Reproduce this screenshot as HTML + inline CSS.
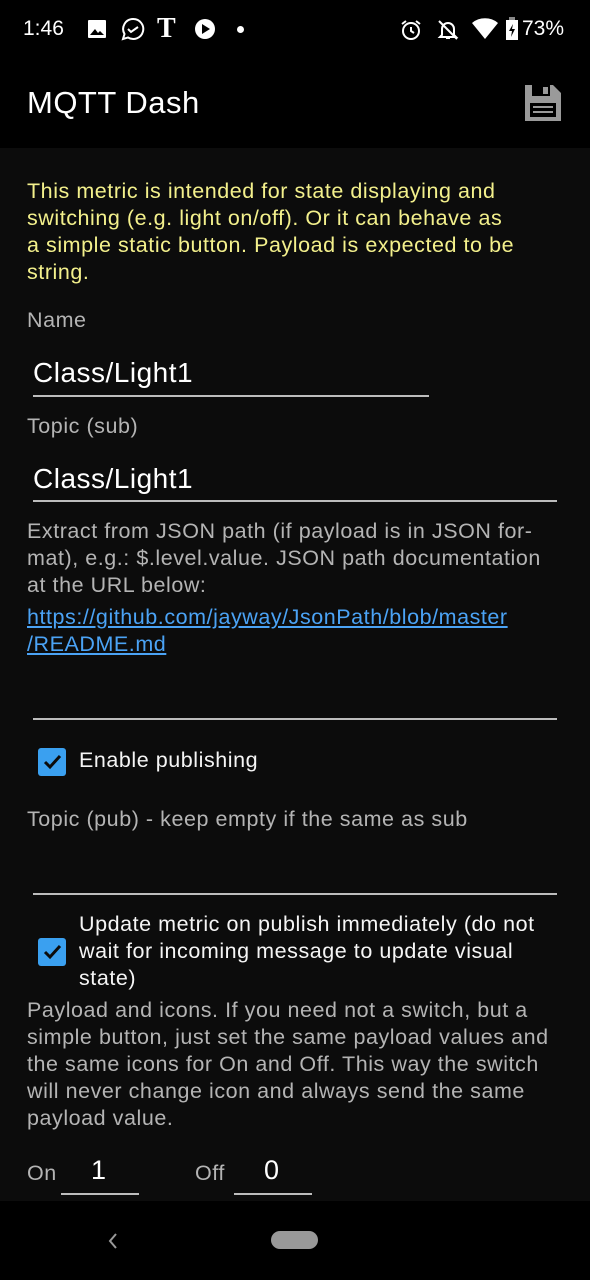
<!DOCTYPE html>
<html><head><meta charset="utf-8"><style>
*{margin:0;padding:0;box-sizing:border-box}
body{width:590px;height:1280px;background:#0c0c0c;font-family:"Liberation Sans",sans-serif;position:relative;overflow:hidden;color:#fff}
.a{position:absolute;white-space:nowrap}
.y{color:#f3f08c;font-size:21.5px;letter-spacing:0.55px;left:27px}
.g{color:#b4b4b4;font-size:21.5px;letter-spacing:0.55px;left:27px}
.ln{position:absolute;height:1.5px;background:#bdbdbd}
.cb{position:absolute;left:38px;width:28px;height:28px;background:#3aa0f0;border-radius:3px}
.w{color:#f5f5f5;font-size:21.5px;letter-spacing:0.55px}
</style></head><body>
<div style="position:absolute;left:0;top:0;width:590px;height:148px;background:#000"></div>
<div class="a" style="left:23px;top:17px;font-size:21px">1:46</div>
<svg class="a" style="left:87px;top:19px" width="20" height="20" viewBox="0 0 20 20"><rect x="1" y="1" width="18" height="18" rx="1" fill="#fff"/><path d="M3 16l5-6 3 4 2-2 4 4z" fill="#000"/></svg>
<svg class="a" style="left:121px;top:17px" width="24" height="24" viewBox="0 0 24 24"><path d="M12 2a10 10 0 0 0-8.5 15L2 22l5-1.5A10 10 0 1 0 12 2z" fill="none" stroke="#fff" stroke-width="2"/><path d="M7 12l3 3 7-5" fill="none" stroke="#fff" stroke-width="2"/></svg>
<div class="a" style="left:157px;top:13px;font-family:'Liberation Serif',serif;font-size:28px;font-weight:bold">T</div>
<svg class="a" style="left:194px;top:18px" width="22" height="22" viewBox="0 0 22 22"><circle cx="11" cy="11" r="10" fill="#fff"/><path d="M8 6l8 5-8 5z" fill="#000"/></svg>
<div class="a" style="left:237px;top:26px;width:7px;height:7px;border-radius:50%;background:#fff"></div>
<svg class="a" style="left:399px;top:18px" width="24" height="24" viewBox="0 0 24 24"><circle cx="12" cy="13" r="8" fill="none" stroke="#fff" stroke-width="2"/><path d="M12 9v4l3 2M3 6l4-3M21 6l-4-3" stroke="#fff" stroke-width="2" fill="none"/></svg>
<svg class="a" style="left:436px;top:18px" width="24" height="24" viewBox="0 0 24 24"><path d="M6 17V11a6 6 0 0 1 12 0v6l2 2H4z M10 20h4" fill="none" stroke="#fff" stroke-width="2"/><path d="M3 3l18 18" stroke="#fff" stroke-width="2"/></svg>
<svg class="a" style="left:472px;top:18px" width="26" height="22" viewBox="0 0 26 22"><path d="M13 21L0 5a20 20 0 0 1 26 0z" fill="#fff"/></svg>
<svg class="a" style="left:505px;top:17px" width="14" height="24" viewBox="0 0 14 24"><rect x="1" y="3" width="12" height="20" fill="#fff"/><rect x="4" y="0" width="6" height="3" fill="#888"/><path d="M8 7l-4 7h3l-1 6 4-8H7z" fill="#000"/></svg>
<div class="a" style="left:522px;top:17px;font-size:21px">73%</div>
<div class="a" style="left:27px;top:85px;font-size:31px;letter-spacing:0.5px">MQTT Dash</div>
<svg class="a" style="left:524px;top:84px" width="38" height="38" viewBox="0 0 38 38"><path d="M1 1h28l8 8v28H1z" fill="#9a9a9a"/><rect x="8" y="1" width="18" height="11" fill="#000"/><rect x="19" y="3" width="5" height="7" fill="#9a9a9a"/><rect x="6" y="19" width="26" height="14" fill="#000"/><rect x="9" y="22" width="20" height="2" fill="#9a9a9a"/><rect x="9" y="27" width="20" height="2" fill="#9a9a9a"/></svg>

<div class="a y" style="top:179px">This metric is intended for state displaying and</div>
<div class="a y" style="top:206px">switching (e.g. light on/off). Or it can behave as</div>
<div class="a y" style="top:233px">a simple static button. Payload is expected to be</div>
<div class="a y" style="top:260px">string.</div>
<div class="a g" style="top:308px">Name</div>
<div class="a" style="left:33px;top:357px;font-size:28px;letter-spacing:0.5px">Class/Light1</div>
<div class="ln" style="left:33px;top:395px;width:396px"></div>
<div class="a g" style="top:414px">Topic (sub)</div>
<div class="a" style="left:33px;top:463px;font-size:28px;letter-spacing:0.5px">Class/Light1</div>
<div class="ln" style="left:33px;top:500px;width:524px"></div>
<div class="a g" style="top:519px">Extract from JSON path (if payload is in JSON for-</div>
<div class="a g" style="top:546px">mat), e.g.: $.level.value. JSON path documentation</div>
<div class="a g" style="top:573px">at the URL below:</div>
<div class="a" style="left:27px;top:605px;font-size:21.5px;letter-spacing:0.55px;color:#4ba3f5;text-decoration:underline">https://github.com/jayway/JsonPath/blob/master</div>
<div class="a" style="left:27px;top:632px;font-size:21.5px;letter-spacing:0.55px;color:#4ba3f5;text-decoration:underline">/README.md</div>
<div class="ln" style="left:33px;top:718px;width:524px"></div>
<div class="cb" style="top:748px"></div>
<svg class="a" style="left:38px;top:748px" width="28" height="28"><path d="M7 14l5 5 10-11" fill="none" stroke="#0c0c0c" stroke-width="3"/></svg>
<div class="a w" style="left:79px;top:748px">Enable publishing</div>
<div class="a g" style="top:807px">Topic (pub) - keep empty if the same as sub</div>
<div class="ln" style="left:33px;top:893px;width:524px"></div>
<div class="cb" style="top:938px"></div>
<svg class="a" style="left:38px;top:938px" width="28" height="28"><path d="M7 14l5 5 10-11" fill="none" stroke="#0c0c0c" stroke-width="3"/></svg>
<div class="a w" style="left:79px;top:912px">Update metric on publish immediately (do not</div>
<div class="a w" style="left:79px;top:939px">wait for incoming message to update visual</div>
<div class="a w" style="left:79px;top:966px">state)</div>
<div class="a g" style="top:998px">Payload and icons. If you need not a switch, but a</div>
<div class="a g" style="top:1025px">simple button, just set the same payload values and</div>
<div class="a g" style="top:1052px">the same icons for On and Off. This way the switch</div>
<div class="a g" style="top:1079px">will never change icon and always send the same</div>
<div class="a g" style="top:1106px">payload value.</div>
<div class="a g" style="top:1161px">On</div>
<div class="a" style="left:91px;top:1155px;font-size:27px">1</div>
<div class="ln" style="left:61px;top:1193px;width:78px"></div>
<div class="a g" style="left:195px;top:1161px">Off</div>
<div class="a" style="left:264px;top:1155px;font-size:27px">0</div>
<div class="ln" style="left:234px;top:1193px;width:78px"></div>
<div style="position:absolute;left:0;top:1201px;width:590px;height:79px;background:#000"></div>
<svg class="a" style="left:106px;top:1231px" width="14" height="20"><path d="M10 3L4 10l6 7" fill="none" stroke="#999" stroke-width="2"/></svg>
<div class="a" style="left:271px;top:1231px;width:47px;height:18px;border-radius:9px;background:#999"></div>
</body></html>
